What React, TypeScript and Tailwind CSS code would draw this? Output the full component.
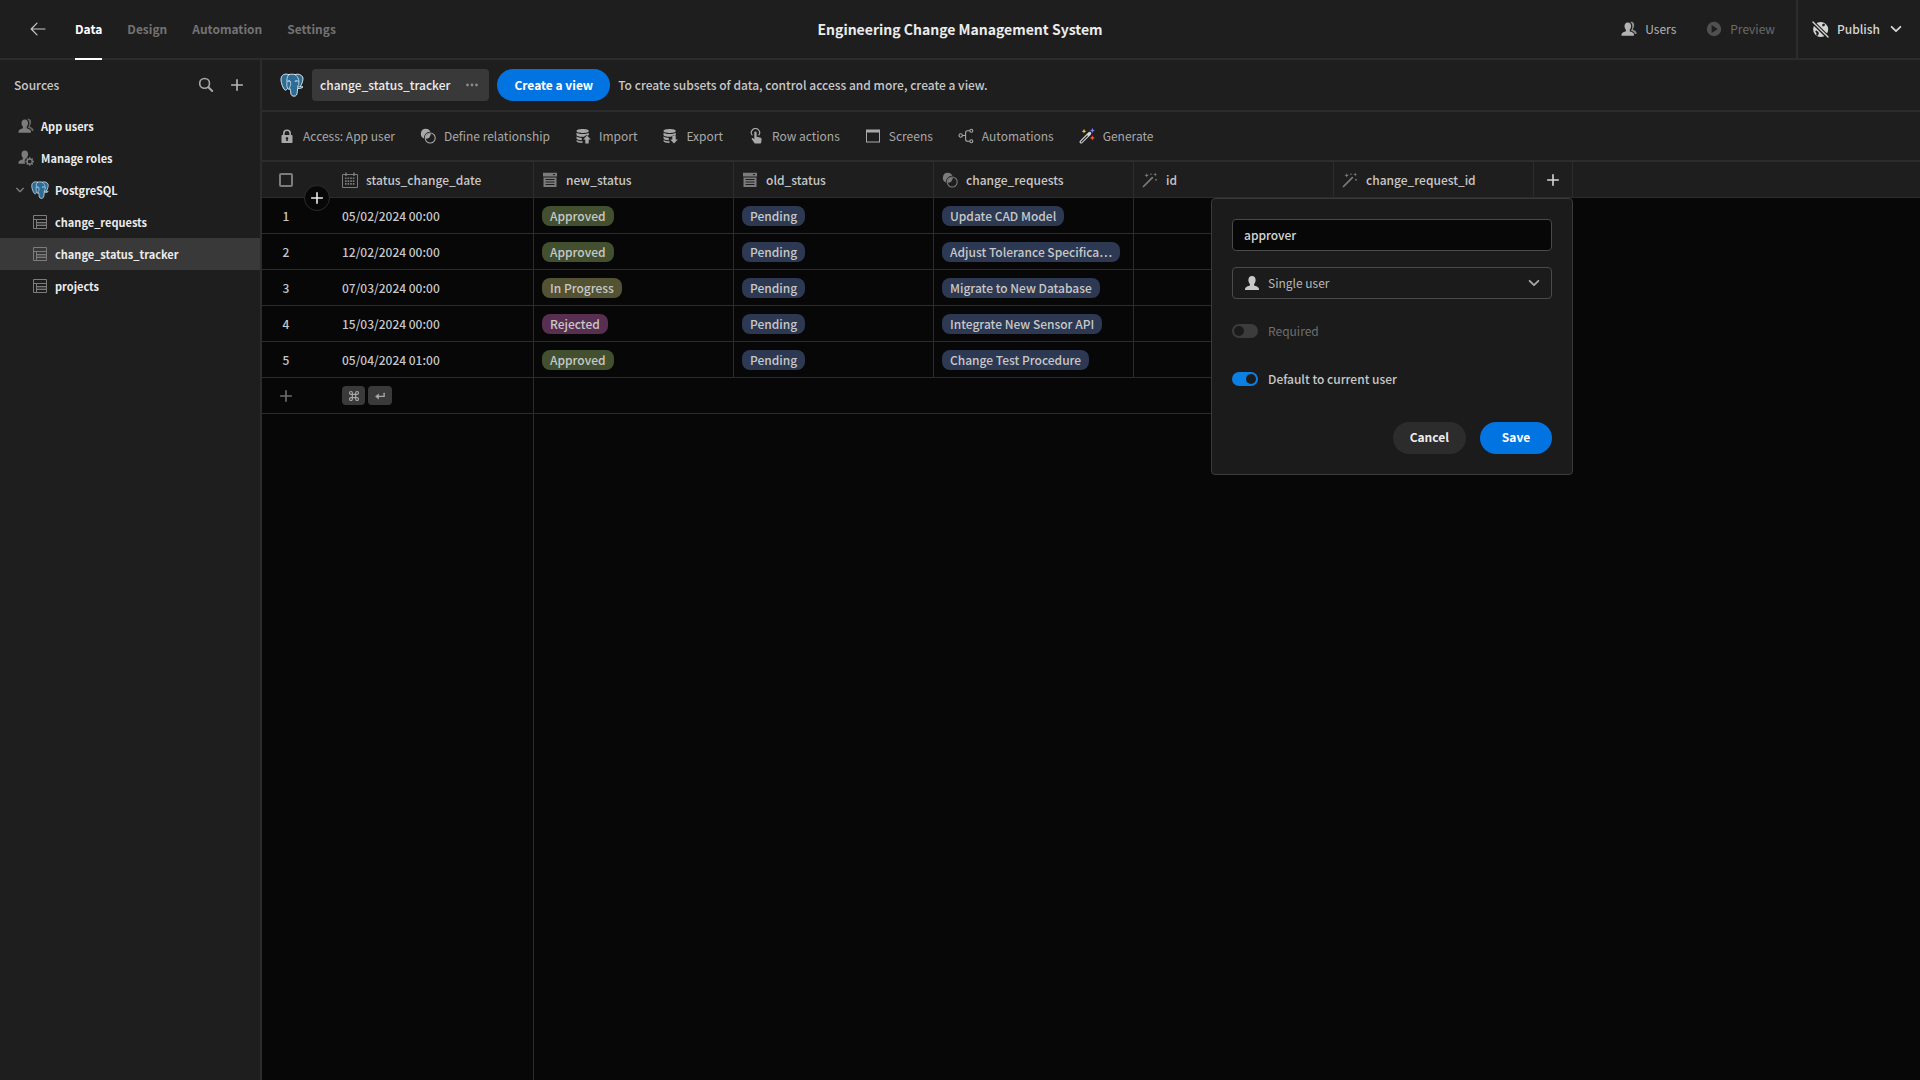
import React from "react";
import type { ReactNode } from "react";

type IconProps = { className?: string };

function Svg({ className = "size-4", children, box = "0 0 16 16" }: IconProps & { children: ReactNode; box?: string }) {
  return (
    <svg viewBox={box} className={`${className} shrink-0`} fill="currentColor" aria-hidden="true">
      {children}
    </svg>
  );
}

const line = { fill: "none", stroke: "currentColor" } as const;

const ArrowLeftIcon = (p: IconProps) => (
  <Svg {...p}>
    <path {...line} strokeWidth="1.2" strokeLinecap="round" strokeLinejoin="round" d="M15 8H1.2M7 2.2 1.2 8 7 13.8" />
  </Svg>
);

const SearchIcon = (p: IconProps) => (
  <Svg {...p}>
    <circle {...line} strokeWidth="1.6" cx="6.6" cy="6.4" r="4.9" />
    <path {...line} strokeWidth="2" strokeLinecap="round" d="m10.4 10.2 3.8 3.8" />
  </Svg>
);

const PlusIcon = (p: IconProps) => (
  <Svg {...p}>
    <path {...line} strokeWidth="1.6" strokeLinecap="round" d="M8 2.7v10.6M2.7 8h10.6" />
  </Svg>
);

const ChevronIcon = (p: IconProps) => (
  <Svg {...p}>
    <path {...line} strokeWidth="1.8" strokeLinecap="round" strokeLinejoin="round" d="M3.6 5.8 8 10.2l4.4-4.4" />
  </Svg>
);

const UsersIcon = (p: IconProps) => (
  <Svg {...p}>
    <path d="M6.8 1.4c2 0 3.3 1.5 3.3 3.7 0 1.5-.6 2.9-1.4 3.7v1.2c0 .3.2.5.5.6 2.2.7 3.8 1.6 3.8 3.2v.9H.5v-.9c0-1.6 1.6-2.5 3.9-3.2.3-.1.5-.3.5-.6V8.8c-.8-.8-1.4-2.2-1.4-3.7 0-2.2 1.3-3.7 3.3-3.7z" />
    <path d="M9.9.8c2.1-.4 3.3 1.3 3.3 3.4 0 1.3-.4 2.4-1.1 3.2v1c0 .3.1.5.4.6 1.6.6 3 1.5 3 3v1h-1.6c-.3-1.6-1.9-2.6-3.9-3.3V9.4c.8-1 1.3-2.5 1.3-4.1 0-1.900-.8-3.500-2.200-4.300z" opacity=".75" />
  </Svg>
);

const UserIcon = (p: IconProps) => (
  <Svg {...p}>
    <path d="M8 1c2.2 0 3.6 1.6 3.6 4 0 1.6-.6 3-1.5 3.9v1.2c0 .3.2.6.5.7 2.5.7 4.4 1.700 4.400 3.300v.9H1v-.9c0-1.600 1.900-2.600 4.400-3.300.3-.1.5-.4.5-.7V8.900C5 8 4.400 6.600 4.400 5c0-2.400 1.400-4 3.600-4z" />
  </Svg>
);

const UserGearIcon = (p: IconProps) => (
  <Svg {...p}>
    <path d="M6.8.6c2 0 3.3 1.500 3.300 3.700 0 1.300-.4 2.400-1.100 3.200-1.400.8-2.300 2.300-2.300 4 0 .9.2 1.600.6 2.300H.5v-1c0-1.600 1.600-2.500 3.900-3.200.3-.1.5-.3.5-.6V8c-.8-.8-1.400-2.200-1.400-3.700 0-2.200 1.300-3.700 3.300-3.700z" />
    <circle {...line} strokeWidth="1.3" cx="11.7" cy="11.5" r="2.5" />
    <path {...line} strokeWidth="1.4" d="M11.7 7.2v1.8M11.7 14v1.8M7.4 11.5h1.8M14.2 11.5H16M8.7 8.5l1.2 1.2M13.5 13.3l1.2 1.2M14.7 8.5l-1.2 1.2M9.9 13.3l-1.2 1.2" />
  </Svg>
);

const TableIcon = (p: IconProps) => (
  <Svg {...p}>
    <path {...line} d="M1.5 1.5h13v13h-13zM1.5 5.5h13M4.5 5.5v9M4.5 8.5h10M4.5 11.5h10" />
    <path d="M5 9h9v2.500H5z" opacity=".35" />
  </Svg>
);

const LockIcon = (p: IconProps) => (
  <Svg {...p}>
    <path
      fillRule="evenodd"
      d="M12.7 7H12V5.5a4 4 0 0 0-8 0V7h-.7a.8.8 0 0 0-.8.8v6.4c0 .5.3.8.8.8h9.4c.5 0 .8-.3.8-.8V7.800a.8.8 0 0 0-.8-.8zM5.6 5.500a2.400 2.400 0 0 1 4.800 0V7H5.600zM8.800 11.300V13H7.200v-1.700a1.300 1.300 0 1 1 1.600 0z"
    />
  </Svg>
);

const RelationshipIcon = (p: IconProps) => (
  <Svg {...p}>
    <path d="M5.7.8a5 5 0 0 1 4.700 3.100A6 6 0 0 0 3.900 10.400 5 5 0 0 1 5.700.8z" />
    <circle {...line} strokeWidth="1.1" cx="10.2" cy="10" r="5" />
    <path d="M10.8 5.2A5 5 0 0 1 5.400 10.800 5 5 0 0 1 10.800 5.200z" />
  </Svg>
);

const stack =
  "M7.8 1C11 1 13.8 1.7 13.8 3S11 5 7.800 5 1.500 4.300 1.500 3 4.600 1 7.800 1zM1.500 4.700c1.300.9 3.700 1.400 6.300 1.400s4.900-.5 6-1.400v1.900c0 .4-.5.9-1.300 1.200l-.9-.8L8.900 8.700C5.300 8.900 1.500 8.200 1.500 6.700zM1.500 8.500c1.200.8 3.100 1.300 5.300 1.400V12.300C4 12.100 1.500 11.400 1.500 10.200zM1.500 12c1.200.8 3.300 1.300 6 1.300v1.600c-3.300 0-6-.7-6-2z";

const ImportIcon = (p: IconProps) => (
  <Svg {...p}>
    <path d={stack} />
    <path d="m12 7.5 3.8 4.1h-2.1V15.500h-3.400v-3.900H8.200z" />
  </Svg>
);

const ExportIcon = (p: IconProps) => (
  <Svg {...p}>
    <path d={stack} />
    <path d="m12 15.5 3.8-4.1h-2.1V7.500h-3.400v3.900H8.200z" />
  </Svg>
);

const TouchIcon = (p: IconProps) => (
  <Svg {...p}>
    <path d="M6.3 4.5c0-1.5 2.300-1.500 2.300 0v4.300l3.400.7c1.100.2 1.700.9 1.600 2l-.4 3.100c-.1.5-.4.9-1 .9H7.300c-.4 0-.7-.1-.9-.5L3.800 11.300c-.5-.9.5-1.600 1.300-1l1.200 1z" />
    <path {...line} strokeWidth="1.2" d="M4.4 7.4A4.1 4.1 0 1 1 10.600 7.300" />
  </Svg>
);

const WindowIcon = (p: IconProps) => (
  <Svg {...p}>
    <path fillRule="evenodd" d="M1 1.5h14v13H1zM2 4.5v9h12v-9z" />
  </Svg>
);

const FlowIcon = (p: IconProps) => (
  <Svg {...p}>
    <g {...line} strokeWidth="1.1">
      <circle cx="2.7" cy="7.5" r="1.7" />
      <circle cx="13.3" cy="2.7" r="1.5" />
      <circle cx="13.3" cy="13.3" r="1.5" />
      <path d="M4.4 7.5h3.2M11.8 2.7H9.600c-1.300 0-2 .8-2 2v6.600c0 1.200.7 2 2 2h2.200" />
    </g>
  </Svg>
);

const MagicIcon = (p: IconProps) => (
  <Svg {...p}>
    <path fill="none" stroke="#d5d5d5" strokeWidth="3.2" strokeLinecap="round" d="M2.2 13.9 10.6 5.5" />
    <path fill="none" stroke="#1e1e1e" strokeWidth="1.2" strokeLinecap="round" d="m2.3 13.8 6-6" />
    <path fill="#e8c62e" d="m5 .8.7 1.700 1.700.7-1.700.7L5 5.600l-.7-1.700-1.700-.7 1.700-.7z" />
    <path fill="#7c7cf0" d="m13.4 0 .8 1.700 1.700.8-1.700.8-.8 1.700-.8-1.700-1.700-.8 1.700-.8z" />
    <path fill="#f0503c" d="m13.4 7.3.8 1.800 1.800.8-1.800.8-.8 1.800-.8-1.800-1.800-.8 1.800-.8z" />
  </Svg>
);

const WandIcon = (p: IconProps) => (
  <Svg {...p}>
    <path {...line} strokeWidth="1.7" strokeLinecap="round" d="m1.5 14.5 8.8-8.8" />
    <path d="m4.7 1 .6 1.700 1.700.6-1.700.6-.6 1.700-.6-1.700-1.700-.6 1.700-.6zM13.2.5l.5 1.500 1.500.5-1.500.5-.5 1.500-.5-1.500-1.500-.5 1.500-.5zM9 1.300l.9.9-.9.9-.9-.9zM14 6.700l1.100 1.100L14 8.900l-1.100-1.100z" />
  </Svg>
);

const CalendarIcon = (p: IconProps) => (
  <Svg {...p}>
    <path {...line} d="M.5 2.5h15v13H.5z" />
    <path {...line} strokeWidth="1.5" d="M4 .5v3.500M12 .5v3.500" />
    <path {...line} strokeWidth="1.6" strokeDasharray="1.6 1" d="M3 6.300h10M3 9.100h10M3 11.900h10" />
  </Svg>
);

const OptionsIcon = (p: IconProps) => (
  <Svg {...p}>
    <path fillRule="evenodd" d="M1 .8h14v3.800H1zM10.600 2l1.400 1.600L13.400 2z" />
    <path fillRule="evenodd" d="M1.500 5.400h13V15h-13zM3.500 7v1.100h9V7zM3.500 9.500v1.100h9V9.500zM3.500 12v1.100h9V12z" />
  </Svg>
);

const PlayIcon = (p: IconProps) => (
  <Svg {...p}>
    <path fillRule="evenodd" d="M8 .8a7.200 7.200 0 1 1 0 14.400A7.200 7.200 0 0 1 8 .8zM5.600 4v8l6-4z" />
  </Svg>
);

const GlobeStrikeIcon = (p: IconProps) => (
  <Svg {...p} box="0 0 18 18">
    <path
      fillRule="evenodd"
      d="M9.200 1A8 8 0 1 1 9.200 17 8 8 0 0 1 9.200 1zM12.300 2.700 10.600 4l.6 1.700 1.800-.4 1-1.400zM4.200 9.900l2.700 1.700.3 2-1.200 2.200-1.500-1.100.2-2-1.200-1.400z"
    />
    <path fill="none" stroke="#1e1e1e" strokeWidth="4" d="m.5.8 16.500 16.400" />
    <path {...line} strokeWidth="1.4" strokeLinecap="round" d="m1 1 16 16" />
  </Svg>
);

const MoreIcon = (p: IconProps) => (
  <Svg {...p}>
    <circle cx="3.5" cy="8" r="1.4" />
    <circle cx="8" cy="8" r="1.4" />
    <circle cx="12.5" cy="8" r="1.4" />
  </Svg>
);

const ReturnIcon = (p: IconProps) => (
  <Svg {...p}>
    <path {...line} strokeWidth="1.8" d="M13.5 3.5V8.500H4" />
    <path d="M6.5 4.5v8L1.500 8.500z" />
  </Svg>
);

const CommandIcon = (p: IconProps) => (
  <Svg {...p}>
    <path
      {...line}
      strokeWidth="1.5"
      d="M5.800 5.800h4.400v4.400H5.800zM5.800 5.800H4.100a1.900 1.900 0 1 1 1.700-1.700zM10.200 5.800h1.700a1.900 1.900 0 1 0-1.700-1.700zM5.800 10.200H4.100a1.900 1.900 0 1 0 1.700 1.700zM10.200 10.200h1.700a1.900 1.900 0 1 1-1.700 1.700z"
    />
  </Svg>
);

const PostgresIcon = ({ className = "size-6" }: IconProps) => (
  <svg viewBox="0 0 24 24" className={`${className} shrink-0`} aria-hidden="true" strokeLinejoin="round" strokeLinecap="round">
    <path
      fill="#2d6c95"
      stroke="#dbe6ee"
      strokeWidth="1"
      d="M8.600 1.600C5 .1.800 1.500 1 7c.1 2.600 1.900 8.300 3.700 9.800 1 .8 2-.1 3-1.400.4.800 1.300 1 2.300.8.700 0 .6.700.6 1.700.1 2.500.3 5.300 3.200 5.300 2.700 0 3.300-1.700 3.500-4.500l.3-3.300c2.200.3 4.500-.2 5.400-1.600-.8-.1-2 .1-2.700-.2C22.200 10.700 23.600 6.300 22.700 4 21.300 1.300 17.600.6 15.100 1.600c-1.800-.5-4.500-.7-6.500 0z"
    />
    <path
      fill="none"
      stroke="#dbe6ee"
      strokeWidth=".8"
      d="M8.600 1.600C6.800 3.600 6.900 7 6.900 9.500c0 2.100-.5 3.600.8 5.900M7.200 8.200c1.400-1 3.400-.8 3.400 1 0 2 .3 3.300-.7 4.500-.6.8-.2 1.800.1 2.500M15.100 1.600c3.600 2 4.300 7.100 3.500 9.800-.3 1-1.300 1.800-1 2.800M15 8.300c1-.7 2.600-.7 3.600 0M20.300 13.600c-1-.2-1.900.2-2.700.6"
    />
    <circle cx="9" cy="8.300" r=".6" fill="#fff" />
    <circle cx="16" cy="8" r=".6" fill="#fff" />
  </svg>
);

const navTabs = ["Data", "Design", "Automation", "Settings"];

const tables = ["change_requests", "change_status_tracker", "projects"];

const tools: [string, (p: IconProps) => ReactNode][] = [
  ["Access: App user", LockIcon],
  ["Define relationship", RelationshipIcon],
  ["Import", ImportIcon],
  ["Export", ExportIcon],
  ["Row actions", TouchIcon],
  ["Screens", WindowIcon],
  ["Automations", FlowIcon],
  ["Generate", MagicIcon],
];

const columns: [string, (p: IconProps) => ReactNode][] = [
  ["status_change_date", CalendarIcon],
  ["new_status", OptionsIcon],
  ["old_status", OptionsIcon],
  ["change_requests", RelationshipIcon],
  ["id", WandIcon],
  ["change_request_id", WandIcon],
];

const rows = [
  ["05/02/2024 00:00", "Approved", "Pending", "Update CAD Model"],
  ["12/02/2024 00:00", "Approved", "Pending", "Adjust Tolerance Specifica…"],
  ["07/03/2024 00:00", "In Progress", "Pending", "Migrate to New Database"],
  ["15/03/2024 00:00", "Rejected", "Pending", "Integrate New Sensor API"],
  ["05/04/2024 01:00", "Approved", "Pending", "Change Test Procedure"],
];

const pillColors: Record<string, string> = {
  Approved: "bg-[#435030]",
  "In Progress": "bg-[#535232]",
  Rejected: "bg-[#582f50]",
};

function Pill({ text }: { text: string }) {
  return (
    <span className={`block w-fit max-w-full truncate rounded-lg px-2 leading-5 ${pillColors[text] ?? "bg-[#2d3852]"}`}>
      {text}
    </span>
  );
}

function SidebarRow({ icon, label, className = "", selected = false }: { icon: ReactNode; label: string; className?: string; selected?: boolean }) {
  return (
    <li>
      <a
        href="#"
        aria-current={selected ? "page" : undefined}
        className={`flex h-8 items-center text-[11px] font-bold text-[#ececec] ${selected ? "bg-[#393939]" : ""} ${className}`}
      >
        {icon}
        {label}
      </a>
    </li>
  );
}

function TopBar() {
  return (
    <header className="grid h-15 grid-cols-[1fr_auto_1fr] border-b-2 border-[#2c2c2c]">
      <div className="flex items-stretch pl-[30px]">
        <button aria-label="Back" className="mr-[29px] text-[#c8c8c8]">
          <ArrowLeftIcon />
        </button>
        <nav className="flex gap-[25px]">
          {navTabs.map((tab, i) => (
            <a
              key={tab}
              href="#"
              className={`-mb-0.5 flex items-center border-b-2 font-bold ${i === 0 ? "border-white text-white" : "border-transparent text-[#737373]"}`}
            >
              {tab}
            </a>
          ))}
        </nav>
      </div>
      <h1 className="self-center text-sm font-bold text-[#ececec]">Engineering Change Management System</h1>
      <div className="flex items-stretch justify-end">
        <button className="mr-[30px] flex items-center gap-2 text-[#b3b3b3]">
          <UsersIcon />
          Users
        </button>
        <button className="mr-[21px] flex items-center gap-2 text-[#6a6a6a]">
          <PlayIcon className="size-4 text-[#505050]" />
          Preview
        </button>
        <button className="flex items-center gap-2 border-l-2 border-[#2c2c2c] pr-4 pl-[14px] font-medium text-[#d5d5d5]">
          <GlobeStrikeIcon className="size-[17px]" />
          Publish
          <ChevronIcon />
        </button>
      </div>
    </header>
  );
}

function Sidebar() {
  return (
    <aside className="w-[262px] shrink-0 border-r-2 border-[#2c2c2c]">
      <div className="flex h-[50px] items-center pr-[15px] pl-[14px]">
        <h2 className="flex-1 font-medium text-[#c8c8c8]">Sources</h2>
        <button aria-label="Search sources" className="mr-[15px] text-[#a8a8a8]">
          <SearchIcon />
        </button>
        <button aria-label="Add source" className="text-[#b8b8b8]">
          <PlusIcon />
        </button>
      </div>
      <ul>
        <SidebarRow className="gap-[7px] pl-[18px]" icon={<UsersIcon className="size-4 text-[#7c7c7c]" />} label="App users" />
        <SidebarRow className="gap-[7px] pl-[18px]" icon={<UserGearIcon className="size-4 text-[#7c7c7c]" />} label="Manage roles" />
        <SidebarRow
          className="pl-[14px]"
          icon={
            <>
              <ChevronIcon className="mr-[5px] size-3 text-[#7c7c7c]" />
              <PostgresIcon className="mr-[6px] size-[18px]" />
            </>
          }
          label="PostgreSQL"
        />
        {tables.map((name) => (
          <SidebarRow
            key={name}
            className="gap-[7px] pl-8"
            selected={name === "change_status_tracker"}
            icon={<TableIcon className="size-4 text-[#7c7c7c]" />}
            label={name}
          />
        ))}
      </ul>
    </aside>
  );
}

const switchClass =
  "flex h-[14px] w-[26px] appearance-none items-center rounded-full bg-[#3c3c3c] px-0.5 before:size-[10px] before:rounded-full before:bg-[#1b1b1b] checked:justify-end checked:bg-[#0b80e2]";

function ColumnPopover() {
  return (
    <form className="absolute top-full -right-px z-10 mt-px flex w-[362px] flex-col gap-4 rounded border border-[#3a3a3a] bg-[#1b1b1b] p-5 font-normal text-[#c8c8c8]">
      <input
        aria-label="Column name"
        defaultValue="approver"
        className="h-8 w-full rounded border border-[#4a4a4a] bg-[#070707] px-[11px] pb-0.5 font-medium text-[#d5d5d5] outline-none"
      />
      <label className="flex h-8 items-center gap-2 rounded border border-[#4a4a4a] pr-[9px] pl-[11px]">
        <UserIcon />
        <select aria-label="Column type" className="flex-1 appearance-none bg-transparent text-[#b8b8b8] outline-none">
          <option>Single user</option>
        </select>
        <ChevronIcon className="size-4 text-[#a8a8a8]" />
      </label>
      <label className="flex h-8 items-center gap-[10px] text-[#6f6f6f]">
        <input type="checkbox" role="switch" disabled className={switchClass} />
        Required
      </label>
      <label className="flex h-8 items-center gap-[10px] font-medium">
        <input type="checkbox" role="switch" defaultChecked className={switchClass} />
        Default to current user
      </label>
      <div className="flex justify-end gap-[14px] pt-[11px] font-bold">
        <button type="button" className="h-8 rounded-full bg-[#2c2c2c] px-[17px] pb-0.5 text-[#ececec]">
          Cancel
        </button>
        <button type="submit" className="h-8 w-[72px] rounded-full bg-[#0274e2] pb-0.5 text-white">
          Save
        </button>
      </div>
    </form>
  );
}

const cell = "h-9 border-b border-[#2c2c2c] px-2";

function Grid() {
  return (
    <table className="w-full table-fixed border-separate border-spacing-0 text-left text-[#c8c8c8]">
      <colgroup>
        <col className="w-[72px]" />
        {columns.map(([name]) => (
          <col key={name} className="w-[200px]" />
        ))}
        <col className="w-[39px]" />
        <col />
      </colgroup>
      <thead>
        <tr className="bg-[#1e1e1e]">
          <th className="relative h-9 border-b border-[#2c2c2c] pl-[17px]">
            <input type="checkbox" aria-label="Select all rows" className="block size-[14px] appearance-none rounded-[2px] border-2 border-[#7c7c7c]" />
            <button
              aria-label="Insert row"
              className="absolute right-1 -bottom-[14px] z-10 grid size-[26px] place-items-center rounded-full border border-[#2c2c2c] bg-[#070707] text-[#ececec]"
            >
              <PlusIcon className="size-4" />
            </button>
          </th>
          {columns.map(([name, Icon]) => (
            <th key={name} className="h-9 border-r border-b border-[#2c2c2c] px-2 font-medium">
              <div className="flex items-center gap-2">
                <Icon className="size-4 text-[#7c7c7c]" />
                {name}
              </div>
            </th>
          ))}
          <th className="relative h-9 border-r border-b border-[#2c2c2c]">
            <button aria-label="Add column" className="mx-auto block text-[#d5d5d5]">
              <PlusIcon />
            </button>
            <ColumnPopover />
          </th>
          <th className="h-9 border-b border-[#2c2c2c]" />
        </tr>
      </thead>
      <tbody>
        {rows.map(([date, status, old, request], i) => (
          <tr key={date}>
            <td className={`${cell} font-medium`}>
              <div className="w-8 text-center">{i + 1}</div>
            </td>
            <td className={`${cell} border-r font-medium`}>{date}</td>
            {[status, old, request].map((text, j) => (
              <td key={j} className={`${cell} border-r font-medium`}>
                <Pill text={text} />
              </td>
            ))}
            <td className={cell} />
            <td className={cell} />
            <td className={cell} />
          </tr>
        ))}
        <tr>
          <td className={cell}>
            <button aria-label="Add row" className="ml-2 block text-[#6f6f6f]">
              <PlusIcon />
            </button>
          </td>
          <td className={`${cell} border-r`}>
            <div className="flex gap-[3px] text-[#a8a8a8]">
              <kbd className="grid h-[19px] w-[23px] place-items-center rounded bg-[#3a3a3a]">
                <CommandIcon className="size-3" />
              </kbd>
              <kbd className="grid h-[19px] w-6 place-items-center rounded bg-[#3a3a3a]">
                <ReturnIcon className="size-3" />
              </kbd>
            </div>
          </td>
          <td className={cell} colSpan={6} />
        </tr>
      </tbody>
    </table>
  );
}

export default function App() {
  return (
    <div className="flex min-h-screen flex-col bg-[#1e1e1e] font-['Noto_Sans_CJK_KR','Open_Sans',sans-serif] text-xs leading-5">
      <TopBar />
      <div className="flex flex-1">
        <Sidebar />
        <main className="flex min-w-0 flex-1 flex-col">
          <div className="flex h-[52px] items-center gap-2 border-b-2 border-[#2c2c2c] pl-[18px]">
            <PostgresIcon className="size-6" />
            <button className="flex h-8 items-center gap-[14px] rounded bg-[#393939] pr-[9px] pl-2 font-medium text-[#ececec]">
              change_status_tracker
              <MoreIcon className="size-4 text-[#8a8a8a]" />
            </button>
            <button className="h-8 rounded-full bg-[#0274e2] px-[17px] font-bold text-white">Create a view</button>
            <p className="font-medium text-[#c8c8c8]">To create subsets of data, control access and more, create a view.</p>
          </div>
          <div className="flex h-[50px] items-center gap-[25px] border-b-2 border-[#2c2c2c] pl-[17px] text-[#a8a8a8]">
            {tools.map(([label, Icon]) => (
              <button key={label} className="flex items-center gap-2">
                <Icon />
                {label}
              </button>
            ))}
          </div>
          <div className="flex flex-1 flex-col bg-[#070707]">
            <Grid />
            <div className="w-[272px] flex-1 border-r border-[#2c2c2c]" />
          </div>
        </main>
      </div>
    </div>
  );
}
